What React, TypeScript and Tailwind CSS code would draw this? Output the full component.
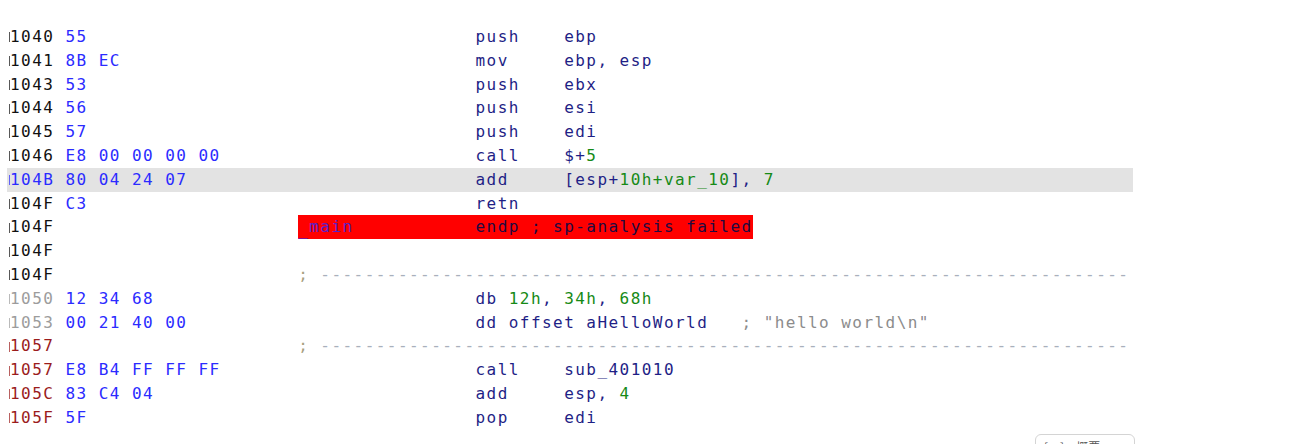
import React from "react";

type Seg = [string, string];

type Line = {
  addr: string;
  addrColor: string;
  bytes?: string;
  mnem?: string;
  ops?: Seg[];
  comment?: string;
  kind?: "code" | "sep" | "blank" | "endp";
  highlight?: boolean;
};

const BLACK = "text-[#111111]";
const BLUE = "text-[#2b2bff]";
const GRAY = "text-[#9c9c9c]";
const DRED = "text-[#9b1c1c]";
const NAVY = "text-[#1f1f86]";
const GREEN = "text-[#168a16]";
const CMT = "text-[#8c8c8c]";

const lines: Line[] = [
  { addr: "1040", addrColor: BLACK, bytes: "55", mnem: "push", ops: [["ebp", NAVY]] },
  { addr: "1041", addrColor: BLACK, bytes: "8B EC", mnem: "mov", ops: [["ebp, esp", NAVY]] },
  { addr: "1043", addrColor: BLACK, bytes: "53", mnem: "push", ops: [["ebx", NAVY]] },
  { addr: "1044", addrColor: BLACK, bytes: "56", mnem: "push", ops: [["esi", NAVY]] },
  { addr: "1045", addrColor: BLACK, bytes: "57", mnem: "push", ops: [["edi", NAVY]] },
  {
    addr: "1046",
    addrColor: BLACK,
    bytes: "E8 00 00 00 00",
    mnem: "call",
    ops: [
      ["$+", NAVY],
      ["5", GREEN],
    ],
  },
  {
    addr: "104B",
    addrColor: BLUE,
    bytes: "80 04 24 07",
    mnem: "add",
    highlight: true,
    ops: [
      ["[esp+", NAVY],
      ["10h+var_10", GREEN],
      ["], ", NAVY],
      ["7", GREEN],
    ],
  },
  { addr: "104F", addrColor: BLACK, bytes: "C3", mnem: "retn" },
  { addr: "104F", addrColor: BLACK, kind: "endp" },
  { addr: "104F", addrColor: BLACK, kind: "blank" },
  { addr: "104F", addrColor: BLACK, kind: "sep" },
  {
    addr: "1050",
    addrColor: GRAY,
    bytes: "12 34 68",
    ops: [
      ["db ", NAVY],
      ["12h", GREEN],
      [", ", NAVY],
      ["34h", GREEN],
      [", ", NAVY],
      ["68h", GREEN],
    ],
  },
  {
    addr: "1053",
    addrColor: GRAY,
    bytes: "00 21 40 00",
    ops: [["dd offset aHelloWorld", NAVY]],
    comment: '; "hello world\\n"',
  },
  { addr: "1057", addrColor: DRED, kind: "sep" },
  { addr: "1057", addrColor: DRED, bytes: "E8 B4 FF FF FF", mnem: "call", ops: [["sub_401010", NAVY]] },
  {
    addr: "105C",
    addrColor: DRED,
    bytes: "83 C4 04",
    mnem: "add",
    ops: [
      ["esp, ", NAVY],
      ["4", GREEN],
    ],
  },
  { addr: "105F", addrColor: DRED, bytes: "5F", mnem: "pop", ops: [["edi", NAVY]] },
];

const pad = (s: string, n: number) => (s.length >= n ? s : s + " ".repeat(n - s.length));

function ListingLine({ line }: { line: Line }) {
  let body: React.ReactNode = null;
  if (line.kind === "endp") {
    body = (
      <span className="inline-block h-full bg-[#ff0000]">
        <span className="relative top-[3px] text-[#2222ee]">_</span>
        <span className="text-[#5a20c8]">{pad("main", 15)}</span>
        <span className="text-[#220a40]">endp ; sp-analysis failed</span>
      </span>
    );
  } else if (line.kind === "sep") {
    body = (
      <>
        <span className="text-[#a8a080]">; </span>
        <span className="text-[#a9b0bc]">{"-".repeat(73)}</span>
      </>
    );
  } else if (line.kind !== "blank") {
    const opsLen = (line.ops ?? []).reduce((n, [t]) => n + t.length, 0);
    body = (
      <>
        <span>{" ".repeat(16)}</span>
        {line.mnem && <span className={NAVY}>{pad(line.mnem, 8)}</span>}
        {(line.ops ?? []).map(([t, c], i) => (
          <span key={i} className={c}>
            {t}
          </span>
        ))}
        {line.comment && (
          <span className={CMT}>{" ".repeat(Math.max(1, 24 - opsLen)) + line.comment}</span>
        )}
      </>
    );
  }

  return (
    <div
      className={`flex h-[23.8px] items-center whitespace-pre leading-[23.8px] ${
        line.highlight ? "bg-[#e3e3e3]" : ""
      }`}
    >
      {/* sliver of the scrolled-off segment prefix */}
      <span className={`mt-[1px] h-[10px] w-[3px] shrink-0 border-r-[1.5px] border-current opacity-70 ${line.addrColor}`} />
      <span className="h-full">
        <span className={line.addrColor}>{line.addr + " "}</span>
        <span className={BLUE}>{pad(line.bytes ?? "", 21)}</span>
        {body}
      </span>
    </div>
  );
}

export default function App() {
  return (
    <div className="relative h-[444px] w-[1293px] overflow-hidden bg-white">
      <div className="ml-[7px] w-[1126px] overflow-hidden pt-[25px] font-['DejaVu_Sans_Mono',monospace] text-[16px] tracking-[1.45px]">
        {lines.map((l, i) => (
          <ListingLine key={i} line={l} />
        ))}
      </div>

      <div className="absolute left-[1035px] top-[434px] flex h-[24px] w-[100px] items-start gap-3 rounded-md border border-[#d4d4d4] bg-white px-2 pt-[3px] font-['Noto_Sans_CJK_SC',sans-serif] text-[12px] text-[#555]">
        <span>[·]</span>
        <span>概要</span>
      </div>
    </div>
  );
}
